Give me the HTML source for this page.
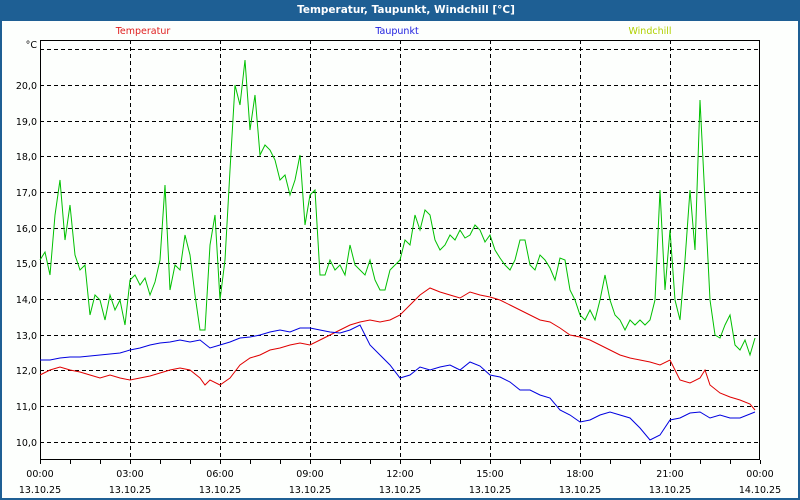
<!DOCTYPE html><html><head><style>
body{margin:0;width:800px;height:500px;overflow:hidden;background:#1e5f94;font-family:"DejaVu Sans","Liberation Sans",sans-serif}
</style></head><body>
<svg width="800" height="500" xmlns="http://www.w3.org/2000/svg" style="position:absolute;left:0;top:0">
<rect x="0" y="0" width="800" height="500" fill="#1e5f94"/>
<rect x="2" y="21" width="796" height="477" fill="#fdfffd"/>
<text x="406" y="13" font-size="10.5" font-weight="bold" fill="#fff" text-anchor="middle" font-family="DejaVu Sans, sans-serif">Temperatur, Taupunkt, Windchill [°C]</text>
<g font-size="9.5" text-anchor="middle" font-family="DejaVu Sans, sans-serif">
<text x="143" y="34" fill="#e02020">Temperatur</text>
<text x="397" y="34" fill="#2020e0">Taupunkt</text>
<text x="650" y="34" fill="#b0d000">Windchill</text>
</g>
<g stroke="#000" stroke-width="1" stroke-dasharray="4,3" fill="none">
<path d="M40 49.5H760M40 85.5H760M40 121.5H760M40 156.5H760M40 192.5H760M40 228.5H760M40 263.5H760M40 299.5H760M40 335.5H760M40 370.5H760M40 406.5H760M40 442.5H760"/>
<path d="M130.5 40V460M220.5 40V460M310.5 40V460M400.5 40V460M490.5 40V460M580.5 40V460M670.5 40V460"/>
</g>
<rect x="40.5" y="40.5" width="719" height="419" fill="none" stroke="#000"/>
<path stroke="#000" d="M70.5 460v4M100.5 460v4M130.5 460v4M160.5 460v4M190.5 460v4M220.5 460v4M250.5 460v4M280.5 460v4M310.5 460v4M340.5 460v4M370.5 460v4M400.5 460v4M430.5 460v4M460.5 460v4M490.5 460v4M520.5 460v4M550.5 460v4M580.5 460v4M610.5 460v4M640.5 460v4M670.5 460v4M700.5 460v4M730.5 460v4M760.5 460v4M40.5 460v4"/>
<g font-size="9.5" text-anchor="end" fill="#000">
<text x="37" y="48">°C</text>
<text x="37" y="89">20,0</text><text x="37" y="125">19,0</text><text x="37" y="160">18,0</text><text x="37" y="196">17,0</text><text x="37" y="232">16,0</text><text x="37" y="267">15,0</text><text x="37" y="303">14,0</text><text x="37" y="339">13,0</text><text x="37" y="374">12,0</text><text x="37" y="410">11,0</text><text x="37" y="446">10,0</text>
</g>
<g font-size="9.5" text-anchor="middle" fill="#000">
<text x="40" y="477">00:00</text><text x="130" y="477">03:00</text><text x="220" y="477">06:00</text><text x="310" y="477">09:00</text><text x="400" y="477">12:00</text><text x="490" y="477">15:00</text><text x="580" y="477">18:00</text><text x="670" y="477">21:00</text><text x="760" y="477">00:00</text>
<text x="40" y="493">13.10.25</text><text x="130" y="493">13.10.25</text><text x="220" y="493">13.10.25</text><text x="310" y="493">13.10.25</text><text x="400" y="493">13.10.25</text><text x="490" y="493">13.10.25</text><text x="580" y="493">13.10.25</text><text x="670" y="493">13.10.25</text><text x="760" y="493">14.10.25</text>
</g>
<polyline fill="none" stroke="#00c000" stroke-width="1" points="40,260 45,252 50,275 55,215 60,180 65,240 70,205 75,255 80,270 85,265 90,315 95,295 100,300 105,320 110,295 115,310 120,300 125,325 130,280 135,275 140,285 145,278 150,295 155,282 160,260 165,185 170,290 175,265 180,270 185,235 190,255 195,295 200,330 205,330 210,245 215,215 220,300 225,260 230,170 235,85 240,105 245,60 250,130 255,95 260,155 265,145 270,150 275,160 280,180 285,175 290,195 295,180 300,155 305,225 310,195 315,190 320,275 325,275 330,260 335,270 340,265 345,275 350,245 355,265 360,270 365,275 370,260 375,280 380,290 385,290 390,270 395,265 400,260 405,240 410,245 415,215 420,230 425,210 430,215 435,240 440,250 445,245 450,235 455,240 460,230 465,238 470,235 475,225 480,230 485,242 490,235 495,250 500,258 505,265 510,270 515,260 520,240 525,240 530,265 535,270 540,255 545,260 550,268 555,280 560,258 565,260 570,290 575,300 580,315 585,320 590,310 595,320 600,300 605,275 610,300 615,315 620,320 625,330 630,320 635,325 640,320 645,325 650,320 655,300 660,190 665,290 670,230 675,300 680,320 685,260 690,190 695,250 700,100 705,200 710,300 715,335 720,338 725,325 730,315 735,345 740,350 745,340 750,355 755,338"/>
<polyline fill="none" stroke="#e00000" stroke-width="1" points="40,375 50,370 60,367 70,370 80,372 90,375 100,378 110,375 120,378 130,380 140,378 150,376 160,373 170,370 180,368 190,370 200,378 205,385 210,380 220,385 230,378 240,365 250,358 260,355 270,350 280,348 290,345 300,343 310,345 320,340 330,335 340,330 350,325 360,322 370,320 380,322 390,320 400,315 410,305 420,295 430,288 440,292 450,295 460,298 470,292 480,295 490,297 500,300 510,305 520,310 530,315 540,320 550,322 560,328 570,335 580,337 590,340 600,345 610,350 620,355 630,358 640,360 650,362 660,365 670,360 680,380 690,383 700,378 705,370 710,385 720,393 730,397 740,400 750,404 755,410"/>
<polyline fill="none" stroke="#0000e0" stroke-width="1" points="40,360 50,360 60,358 70,357 80,357 90,356 100,355 110,354 120,353 130,350 140,348 150,345 160,343 170,342 180,340 190,342 200,340 210,348 220,345 230,342 240,338 250,337 260,335 270,332 280,330 290,332 300,328 310,328 320,330 330,332 340,333 350,330 360,325 370,345 380,355 390,365 400,378 410,375 420,367 430,370 440,367 450,365 460,370 470,362 480,366 490,375 500,377 510,382 520,390 530,390 540,395 550,398 560,410 570,415 580,422 590,420 600,415 610,412 620,415 630,418 640,428 650,440 660,435 670,420 680,418 690,413 700,412 710,418 720,415 730,418 740,418 750,414 755,412"/>
</svg>
</body></html>
